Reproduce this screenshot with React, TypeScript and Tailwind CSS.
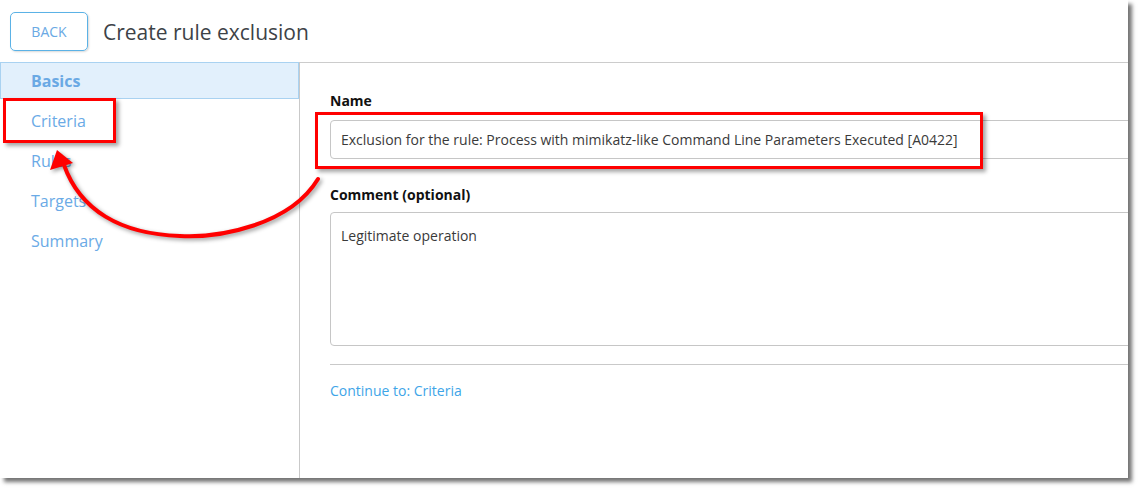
import React from 'react';

const steps = ['Criteria', 'Rules', 'Targets', 'Summary'];

export default function App() {
  return (
    <div className="relative w-[1142px] h-[493px] bg-white font-['Open_Sans',sans-serif]">
      <div className="w-[1128px] h-[478px] bg-white overflow-hidden flex flex-col shadow-[4px_4px_4px_rgba(0,0,0,0.55)]">
        {/* header */}
        <div className="h-[62px] flex items-center pl-[10px] gap-[15px] shrink-0">
          <button className="w-[78px] h-[39px] rounded-[5px] border border-[#5bb2e6] text-[#6aa9e4] text-[14px] shadow-[1px_1px_2px_rgba(0,0,0,0.15)]">
            BACK
          </button>
          <h1 className="mt-[3px] text-[21px] text-[#3d4247]">Create rule exclusion</h1>
        </div>

        <div className="flex flex-1 min-h-0">
          {/* sidebar */}
          <div className="w-[300px] shrink-0 border-r border-[#c9c9c9]">
            <div className="h-[37px] bg-[#e2f0fc] border border-[#a9d2f1] flex items-center pl-[30px] text-[16px] font-bold text-[#6aa9e4]">
              Basics
            </div>
            {steps.map((s) => (
              <div key={s} className="h-[40px] flex items-center pt-[3px] pl-[31px] text-[16px] text-[#6aaae6]">
                {s}
              </div>
            ))}
          </div>

          {/* main */}
          <div className="flex-1 min-w-0 border-t border-[#cccccc] pl-[30px] pt-[27px] overflow-hidden">
            <div className="text-[14px] font-bold text-[#111]">Name</div>
            <div className="mt-[9px] w-[830px] h-[39px] rounded-[4px] border border-[#c6c6c6] flex items-center pl-[10px] text-[14px] text-[#3a3a3a] whitespace-nowrap">
              Exclusion for the rule: Process with mimikatz-like Command Line Parameters Executed [A0422]
            </div>
            <div className="mt-[25px] text-[14px] font-bold text-[#111]">Comment (optional)</div>
            <div className="mt-[7px] w-[830px] h-[134px] rounded-[4px] border border-[#c6c6c6] pl-[10px] pt-[12px] text-[14px] text-[#3a3a3a]">
              Legitimate operation
            </div>
            <div className="mt-[18px] w-[830px] border-t border-[#c9c9c9]" />
            <div className="mt-[15px] text-[14px] text-[#3ea5e8]">Continue to: Criteria</div>
          </div>
        </div>
      </div>

      {/* annotations */}
      <div className="absolute left-[3px] top-[98px] w-[113px] h-[45px] border-[3px] border-[#ff0000] shadow-[3px_3px_4px_rgba(0,0,0,0.35)] pointer-events-none" />
      <div className="absolute left-[315px] top-[112px] w-[668px] h-[57px] border-[3px] border-[#ff0000] shadow-[3px_3px_4px_rgba(0,0,0,0.35)] pointer-events-none" />
      <svg
        className="absolute left-0 top-0 pointer-events-none drop-shadow-[2px_2px_2px_rgba(0,0,0,0.4)]"
        width="1142"
        height="493"
        viewBox="0 0 1142 493"
      >
        <path
          d="M318 179 C 290 225, 220 238, 180 236 C 120 234, 80 210, 64 165"
          fill="none"
          stroke="#ff0000"
          strokeWidth="4"
          strokeLinecap="round"
        />
        <polygon points="57,150 50,170 73,163" fill="#ff0000" />
      </svg>
    </div>
  );
}
